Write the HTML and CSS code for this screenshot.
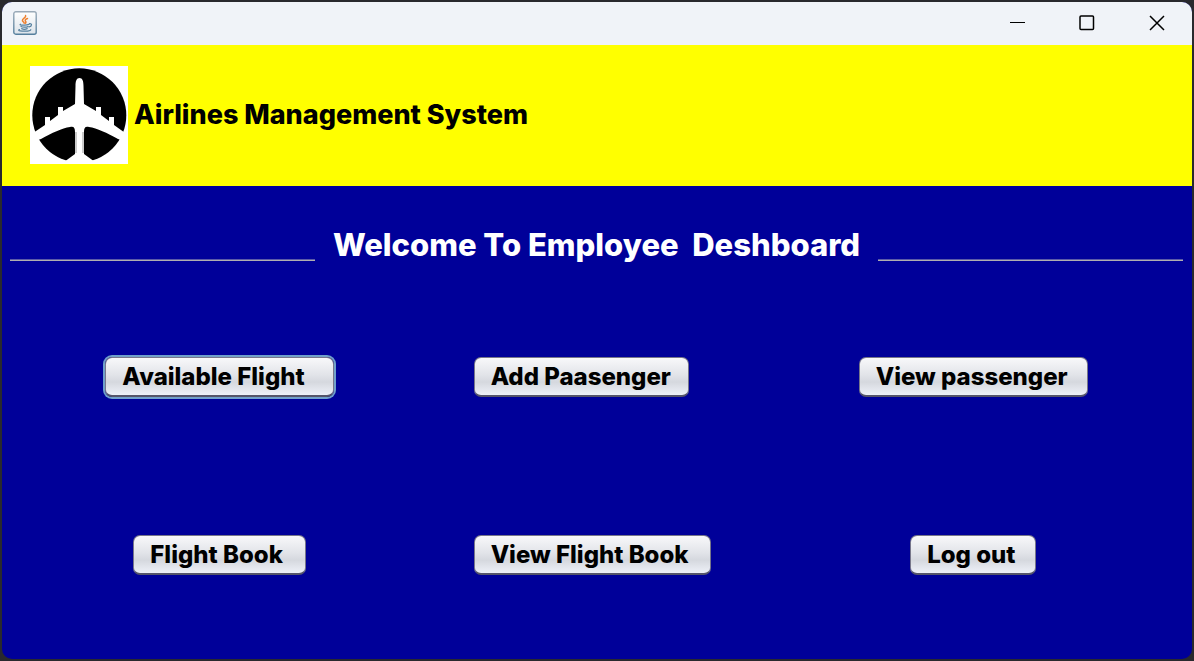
FILE: index.html
```html
<!DOCTYPE html>
<html lang="en">
<head>
<meta charset="utf-8">
<title>Airlines Management System</title>
<link rel="stylesheet" href="styles.css">
</head>
<body>
<div class="window">
  <div class="titlebar">
    <svg class="app-icon" viewBox="0 0 24 24" aria-hidden="true">
      <defs>
        <linearGradient id="tile" x1="0" y1="0" x2="0" y2="1">
          <stop offset="0" stop-color="#fff"/><stop offset="1" stop-color="#dce3ea"/>
        </linearGradient>
        <linearGradient id="edge" x1="0" y1="0" x2="0" y2="1">
          <stop offset="0" stop-color="#9aaab8"/><stop offset="1" stop-color="#557f9d"/>
        </linearGradient>
      </defs>
      <rect x=".8" y=".8" width="22.4" height="22.4" rx="2" fill="url(#tile)" stroke="url(#edge)" stroke-width="1.4"/>
      <g fill="none" stroke-linecap="round">
        <path d="M12.6 4.5c1 2-3.6 3-3.2 5 .2 1 1.5 1.500 1.700 2.500M14.500 7.500c-2.500 1-2.800 2-1.800 3 .5.700.2 1.300-.5 1.800" stroke="#ee8130" stroke-width="1.500"/>
        <path d="M7.500 13.200c-1.500.7.5 1 4 .9 2 0 3.500-.3 4.500-.7M8 15.500c1.500 1 5.500.8 7 .1M8.700 17.600c1.500.8 4 .7 5.500 0M16.500 12.700c3-.5 2.500 2.700-.4 3.200M6.500 18.500c-3 1.200 3 1.800 6 1.600 3 0 5-.6 5.300-1.400" stroke="#5782a1" stroke-width="1.200"/>
      </g>
    </svg>
    <div class="controls">
      <button class="control" aria-label="Minimize"><svg viewBox="0 0 16 16"><path d="M1 7.500h15"/></svg></button>
      <button class="control" aria-label="Maximize"><svg class="thick" viewBox="0 0 16 16"><rect x="1" y="1" width="13.500" height="13.500" rx="1"/></svg></button>
      <button class="control" aria-label="Close"><svg class="thick" viewBox="0 0 16 16"><path d="M1 1l14 14M15 1L1 15"/></svg></button>
    </div>
  </div>
  <header class="banner">
    <svg class="logo" viewBox="0 0 98 98" role="img" aria-label="Airplane">
      <rect width="98" height="98" fill="#fff"/>
      <circle cx="49.300" cy="49.300" r="47" fill="#000"/>
      <path d="M49.500 12c-3 0-4 3-4 8L45 38l-12 7v-4h-5v8l-8 6v-4h-5v8L0 69v5h8l3-1c11-6 21-11 29-12 4-1 5 1 5 5v22L34 96v2h31v-2L54 88V66c0-4 1-6 5-5 8 1 18 6 29 12l3 1h7v-5L84 59v-8h-5v4l-8-6v-8h-5v4l-12-7-.5-18c0-5-1-8-4-8z" fill="#fff"/>
      <path d="M46 66v21M53 66v21" stroke="#999" fill="none"/>
    </svg>
    <div class="brand">Airlines Management System</div>
  </header>
  <main class="content">
    <div class="welcome">
      <span class="rule"></span>
      <h1 class="title">Welcome To Employee&nbsp; Deshboard</h1>
      <span class="rule"></span>
    </div>
    <div class="actions">
      <button class="action wide focused">Available Flight</button>
      <button class="action medium lead">Add Paasenger</button>
      <button class="action wide">View passenger</button>
      <button class="action small">Flight Book</button>
      <button class="action widest lead">View Flight Book</button>
      <button class="action tiny">Log out</button>
    </div>
  </main>
</div>
</body>
</html>
```
FILE: styles.css
```css
* { box-sizing: border-box; }
html, body { height: 100%; }
body {
  margin: 0;
  padding: 2px;
  background: #29292d;
  font-family: Inter, "Open Sans", sans-serif;
}
.window {
  display: flex;
  flex-direction: column;
  min-height: 100%;
  overflow: hidden;
  border-radius: 10px;
  background: #000099;
}
.titlebar {
  display: flex;
  justify-content: space-between;
  align-items: center;
  height: 43px;
  padding: 0 0 2px 11px;
  background: #f0f3f8;
}
.app-icon { width: 24px; height: 24px; }
.controls { display: flex; height: 100%; }
.control {
  display: grid;
  place-items: center;
  width: 70px;
  padding: 0;
  border: 0;
  background: none;
}
.control svg {
  width: 16px;
  height: 16px;
  fill: none;
  stroke: #000;
  stroke-width: 1;
}
.control .thick { stroke-width: 1.5; }
.banner {
  display: flex;
  align-items: center;
  gap: 6px;
  padding: 21px 28px 22px;
  background: #ffff00;
}
.logo { width: 98px; height: 98px; }
.brand {
  color: #000;
  font-size: 27px;
  font-weight: 800;
  line-height: 32px;
}
.content {
  display: flex;
  flex: 1;
  flex-direction: column;
  padding: 41px 9px 84px 8px;
}
.welcome {
  display: flex;
  align-items: center;
  gap: 18px;
}
.rule {
  flex: 1;
  height: 2px;
  margin-top: 29px;
  border-top: 1px solid #5a5aa8;
  background: #b0aeb0;
}
.title {
  margin: 0;
  color: #fff;
  font-size: 31px;
  font-weight: 800;
  line-height: 36px;
}
.actions {
  display: grid;
  flex: 1;
  grid-template-columns: 420fr 334fr 420fr;
  align-content: space-between;
  justify-items: center;
  padding-top: 94px;
}
.action {
  height: 40px;
  padding: 0 16px;
  border: 1px solid #77778a;
  border-bottom: 2px solid #55556a;
  border-radius: 7px;
  background: linear-gradient(#f8f8fa, #e2e4e9 45%, #d5d8de 65%, #eef1f8);
  color: #000;
  font-family: inherit;
  font-size: 24px;
  font-weight: 800;
  line-height: 28px;
  text-align: left;
  white-space: nowrap;
}
.lead { justify-self: start; margin-left: 44px; }
.wide { min-width: 229px; }
.medium { min-width: 215px; }
.widest { min-width: 237px; }
.small { min-width: 173px; }
.tiny { min-width: 126px; }
.focused { box-shadow: 0 0 0 2px #70a0ca; }
```
